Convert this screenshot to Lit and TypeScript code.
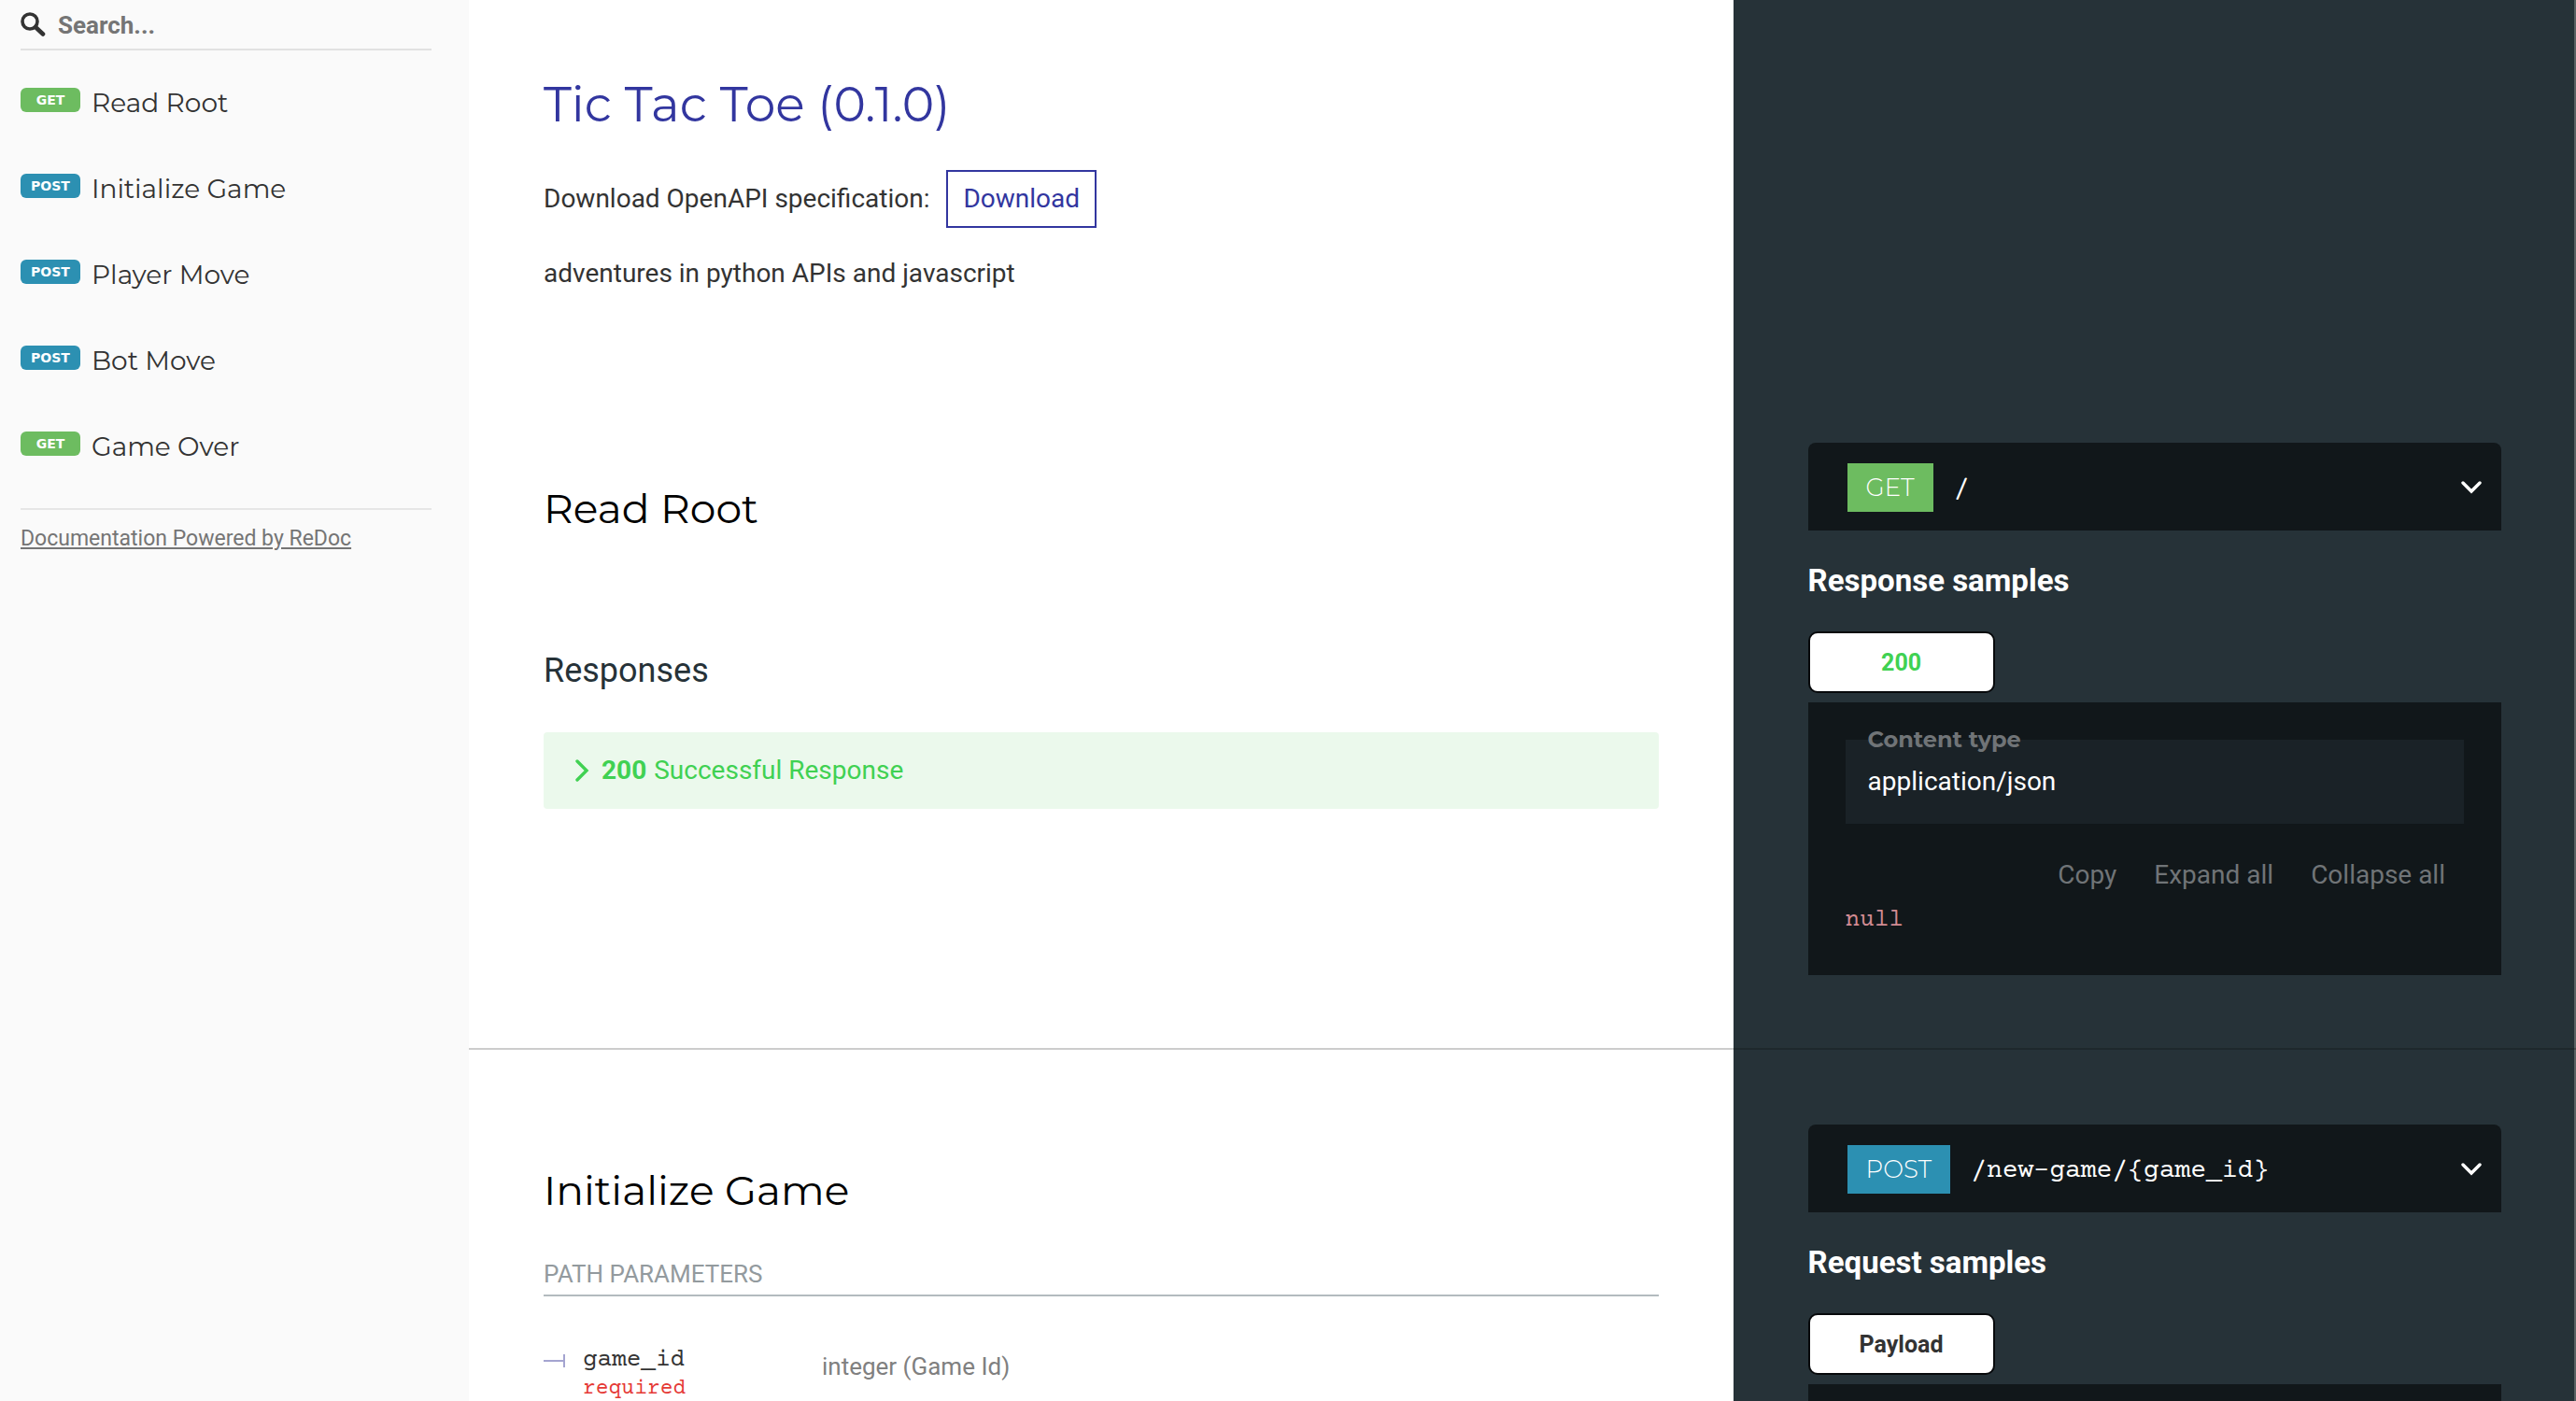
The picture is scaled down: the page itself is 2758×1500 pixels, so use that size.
import { LitElement, html, css, svg } from "lit";
import { customElement, property } from "lit/decorators.js";

interface Operation {
  method: "get" | "post";
  title: string;
}

const OPERATIONS: Operation[] = [
  { method: "get", title: "Read Root" },
  { method: "post", title: "Initialize Game" },
  { method: "post", title: "Player Move" },
  { method: "post", title: "Bot Move" },
  { method: "get", title: "Game Over" },
];

const chevron = svg`<path d="M2 2 L11 11 L20 2" fill="none" stroke="currentColor" stroke-width="3.4" stroke-linecap="round" />`;

@customElement("side-menu")
export class SideMenu extends LitElement {
  static styles = css`
    :host {
      display: block;
      background: #fafafa;
      color: #333333;
      font-family: Roboto, sans-serif;
      overflow: hidden;
    }
    .search {
      display: flex;
      align-items: center;
      gap: 13px;
      height: 52px;
      margin: 0 40px 0 22px;
      border-bottom: 2px solid #e1e1e1;
    }
    .search-icon {
      flex: none;
      width: 27px;
      height: 27px;
    }
    .search-input {
      flex: 1;
      min-width: 0;
      padding: 2px 0 0;
      border: 0;
      outline: 0;
      background: transparent;
      color: #333333;
      font: bold 26px/32px Roboto, sans-serif;
    }
    .search-input::placeholder {
      color: #757575;
      opacity: 1;
    }
    .menu {
      list-style: none;
      margin: 10px 0 0;
      padding: 0;
    }
    .item {
      display: flex;
      align-items: center;
      gap: 12px;
      height: 92px;
      padding: 0 40px 0 22px;
      color: #333333;
      text-decoration: none;
    }
    .badge {
      flex: none;
      width: 64px;
      height: 26px;
      margin-bottom: 6px;
      border-radius: 6px;
      color: #ffffff;
      font: bold 14px/26px Verdana, "DejaVu Sans", sans-serif;
      text-align: center;
    }
    .get {
      background: #6dbc60;
    }
    .post {
      background: #2c90b2;
    }
    .label {
      font: 400 28px/36px Montserrat, Inter, sans-serif;
    }
    .credit {
      margin: 20px 40px 0 22px;
      padding-top: 16px;
      border-top: 2px solid #e6e6e6;
      font-size: 23px;
      line-height: 30px;
    }
    .credit-link {
      color: #757575;
      text-decoration: underline;
    }
  `;

  render() {
    return html`
      <div class="search" role="search">
        <svg class="search-icon" viewBox="0 0 27 27" aria-hidden="true">
          <circle cx="10" cy="10" r="8" fill="none" stroke="#333" stroke-width="3.6" />
          <path d="M16 16 L24 23.500" stroke="#333" stroke-width="4.600" stroke-linecap="round" />
        </svg>
        <input class="search-input" type="text" placeholder="Search..." aria-label="Search" />
      </div>
      <nav>
        <ul class="menu">
          ${OPERATIONS.map(
            (op) => html`<li>
              <a class="item" href="#">
                <span class="badge ${op.method}">${op.method.toUpperCase()}</span>
                <span class="label">${op.title}</span>
              </a>
            </li>`
          )}
        </ul>
      </nav>
      <div class="credit"><a class="credit-link" href="#">Documentation Powered by ReDoc</a></div>
    `;
  }
}

@customElement("endpoint-bar")
export class EndpointBar extends LitElement {
  @property() method = "get";
  @property() path = "/";

  static styles = css`
    :host {
      display: block;
    }
    .bar {
      display: flex;
      align-items: center;
      width: 100%;
      height: 94px;
      padding: 2px 21px 0 42px;
      border: 0;
      border-radius: 8px 8px 0 0;
      background: #11171a;
      color: #ffffff;
      text-align: left;
    }
    .verb {
      padding: 0 20px;
      font: 300 26px/52px Montserrat, Inter, sans-serif;
    }
    .get {
      background: #6dbc60;
    }
    .post {
      background: #2c90b2;
    }
    .path {
      flex: 1;
      margin-left: 22px;
      padding-top: 4px;
      font: 28px/36px "Courier Prime", "Nimbus Mono PS", "Liberation Mono", monospace;
    }
    .arrow {
      width: 22px;
      height: 14px;
    }
  `;

  render() {
    return html`<button class="bar" type="button">
      <span class="verb ${this.method}">${this.method.toUpperCase()}</span>
      <span class="path">${this.path}</span>
      <svg class="arrow" viewBox="0 0 22 14" aria-hidden="true">${chevron}</svg>
    </button>`;
  }
}

@customElement("app-root")
export class AppRoot extends LitElement {
  static styles = css`
    :host {
      display: block;
      color: #333333;
      font: 28px/42px Roboto, sans-serif;
    }
    * {
      box-sizing: border-box;
    }
    .page {
      display: grid;
      grid-template-columns: 502px minmax(0, 1fr);
      height: 100vh;
      overflow: hidden;
    }
    .content {
      background: linear-gradient(to right, #ffffff 60%, #263238 60%);
      box-shadow: inset -2px 0 #596163;
      overflow: hidden;
    }
    .row {
      display: grid;
      grid-template-columns: 60% 40%;
    }
    .operation {
      padding-bottom: 78px;
      border-bottom: 2px solid rgba(0, 0, 0, 0.2);
    }
    .main,
    .samples {
      padding: 0 80px;
      min-width: 0;
    }
    .intro {
      padding-top: 80px;
      padding-bottom: 160px;
    }
    h1,
    h2,
    h3,
    p {
      margin: 0;
      font-weight: 400;
    }
    .title {
      color: #32369f;
      font: 400 52px/64px Montserrat, Inter, sans-serif;
    }
    .download-line {
      display: flex;
      align-items: center;
      gap: 18px;
      margin-top: 38px;
    }
    .download {
      padding: 0 16px;
      border: 2px solid #32369f;
      color: #32369f;
      line-height: 58px;
      text-decoration: none;
    }
    .description {
      margin-top: 28px;
    }
    .heading {
      margin-top: 42px;
      color: #000000;
      font: 400 44px/56px Montserrat, Inter, sans-serif;
    }
    .responses {
      margin-top: 122px;
      color: #263238;
      font-size: 36px;
      line-height: 48px;
    }
    .response {
      display: flex;
      align-items: center;
      width: 100%;
      height: 82px;
      margin-top: 42px;
      padding: 0 34px;
      border: 0;
      border-radius: 4px;
      background: #ebf9ec;
      color: #40d152;
      font: inherit;
      text-align: left;
    }
    .response-arrow {
      width: 15px;
      height: 24px;
      margin-right: 13px;
    }
    .response-code {
      margin-right: 8px;
    }
    .sample-title {
      margin-top: 30px;
      color: #ffffff;
      font-size: 33px;
      font-weight: 700;
      line-height: 48px;
    }
    .tab {
      display: block;
      min-width: 200px;
      height: 66px;
      margin-top: 30px;
      padding: 2px 16px 0;
      border: 2px solid #07090b;
      border-radius: 10px;
      background: #ffffff;
      color: #333333;
      font: bold 25px/32px Roboto, sans-serif;
    }
    .tab-success {
      color: #40d152;
    }
    .panel {
      margin-top: 10px;
      padding: 40px;
      background: #11171a;
    }
    .media {
      position: relative;
      height: 90px;
      padding: 24px;
      background: #1a2227;
      color: #ffffff;
    }
    .media-label {
      position: absolute;
      top: -18px;
      left: 24px;
      color: #707477;
      font: bold 24px/36px Montserrat, Inter, sans-serif;
    }
    .tools {
      display: flex;
      justify-content: flex-end;
      gap: 40px;
      margin: 34px 20px 0 0;
    }
    .tool {
      padding: 0;
      border: 0;
      background: none;
      color: #707477;
      font: inherit;
    }
    .json {
      margin: 10px 0 0;
      color: #d18b92;
      font: 26px/36px "Courier Prime", "Nimbus Mono PS", "Liberation Mono", monospace;
    }
    .operation-top {
      padding-top: 80px;
    }
    .params-title {
      margin-top: 46px;
      padding-bottom: 6px;
      border-bottom: 2px solid #b3bbbf;
      color: #939a9e;
      font-size: 26px;
      line-height: 32px;
    }
    .params {
      width: 100%;
      margin-top: 34px;
      border-collapse: collapse;
    }
    .param-name {
      width: 298px;
      padding: 20px 0 0;
      font-weight: 400;
      text-align: left;
      vertical-align: top;
    }
    .param {
      display: flex;
      align-items: flex-start;
    }
    .connector {
      width: 24px;
      height: 14px;
      margin: 8px 18px 0 0;
    }
    .field {
      display: block;
      font: 26px/30px "Courier Prime", "Nimbus Mono PS", "Liberation Mono", monospace;
    }
    .required {
      display: block;
      color: #e53935;
      font: 23px/30px "Courier Prime", "Nimbus Mono PS", "Liberation Mono", monospace;
    }
    .param-type {
      padding: 20px 0 0;
      color: #808080;
      font-size: 26px;
      vertical-align: top;
    }
  `;

  render() {
    return html`
      <div class="page">
        <side-menu></side-menu>
        <main class="content">
          <section class="row">
            <div class="main intro">
              <h1 class="title">Tic Tac Toe (0.1.0)</h1>
              <p class="download-line">
                <span>Download OpenAPI specification:</span>
                <a class="download" href="#">Download</a>
              </p>
              <p class="description">adventures in python APIs and javascript</p>
            </div>
          </section>

          <section class="row operation">
            <div class="main">
              <h2 class="heading">Read Root</h2>
              <h3 class="responses">Responses</h3>
              <button class="response" type="button">
                <svg class="response-arrow" viewBox="0 0 15 24" aria-hidden="true">
                  <path d="M2 2 L12 12 L2 22" fill="none" stroke="currentColor" stroke-width="3.4" stroke-linecap="round" />
                </svg>
                <strong class="response-code">200</strong>
                <span>Successful Response</span>
              </button>
            </div>
            <div class="samples">
              <endpoint-bar method="get" path="/"></endpoint-bar>
              <h3 class="sample-title">Response samples</h3>
              <button class="tab tab-success" type="button">200</button>
              <div class="panel">
                <div class="media">
                  <span class="media-label">Content type</span>
                  <span>application/json</span>
                </div>
                <div class="tools">
                  <button class="tool" type="button">Copy</button>
                  <button class="tool" type="button">Expand all</button>
                  <button class="tool" type="button">Collapse all</button>
                </div>
                <pre class="json">null</pre>
              </div>
            </div>
          </section>

          <section class="row operation operation-top">
            <div class="main">
              <h2 class="heading">Initialize Game</h2>
              <h3 class="params-title">PATH PARAMETERS</h3>
              <table class="params">
                <tr>
                  <th class="param-name" scope="row">
                    <div class="param">
                      <svg class="connector" viewBox="0 0 24 14" aria-hidden="true">
                        <path d="M0 7 H22 M22 0 V14" fill="none" stroke="#a4a4d0" stroke-width="2" />
                      </svg>
                      <div>
                        <span class="field">game_id</span>
                        <span class="required">required</span>
                      </div>
                    </div>
                  </th>
                  <td class="param-type">integer (Game Id)</td>
                </tr>
              </table>
            </div>
            <div class="samples">
              <endpoint-bar method="post" path="/new-game/{game_id}"></endpoint-bar>
              <h3 class="sample-title">Request samples</h3>
              <button class="tab" type="button">Payload</button>
              <div class="panel"></div>
            </div>
          </section>
        </main>
      </div>
    `;
  }
}
